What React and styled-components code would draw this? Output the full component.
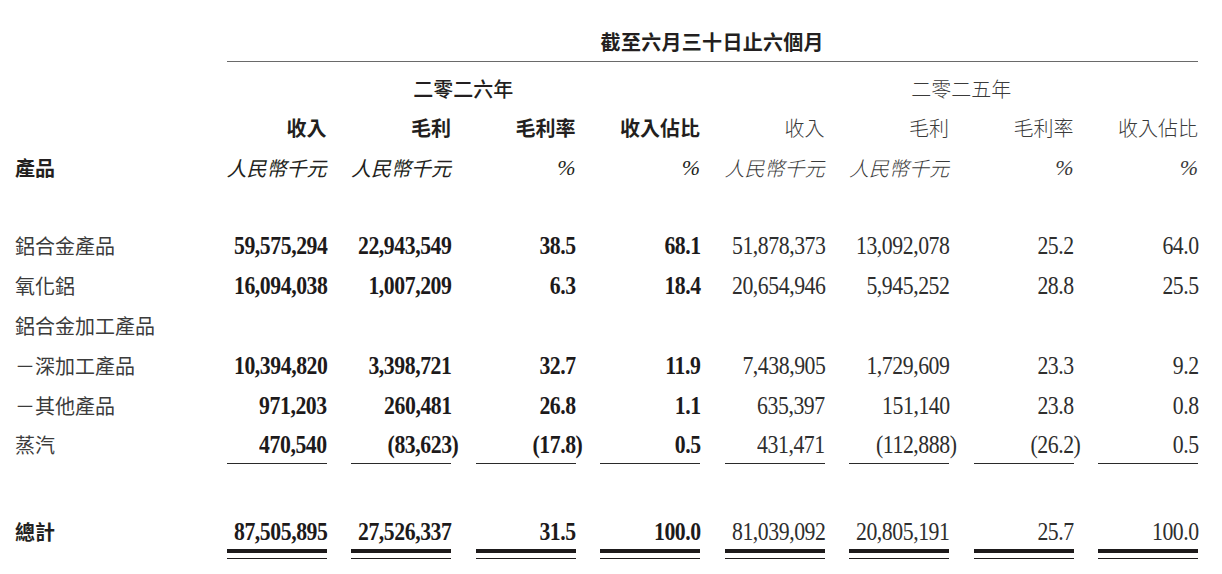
import React from 'react';
import styled, { createGlobalStyle } from 'styled-components';

const GlobalStyle = createGlobalStyle`
  *, *::before, *::after { box-sizing: border-box; }
  html, body { margin: 0; padding: 0; background: #fff; }
  body {
    font-family: "Noto Sans CJK TC", "Noto Sans CJK SC", sans-serif;
    color: #231f20;
  }
`;

const CJK = '"Noto Sans CJK TC", "Noto Sans CJK SC", sans-serif';
const SERIF = '"Liberation Serif", "Times New Roman", serif';

const Sheet = styled.div`
  width: 1222px;
  height: 574px;
  overflow: hidden;
`;

const Row = styled.div`
  display: grid;
  grid-template-columns: 202px repeat(8, 100px);
  column-gap: 24.5px;
  height: ${(p) => p.$h}px;
  padding-top: ${(p) => p.$pt || 0}px;
  margin-top: ${(p) => p.$mt || 0}px;
  align-items: ${(p) => p.$align || 'center'};
`;

const Title = styled.div`
  grid-column: 2 / -1;
  text-align: center;
  font-family: ${CJK};
  font-size: 20px;
  font-weight: 700;
  letter-spacing: 0.3px;
  line-height: 28px;
  padding-bottom: 5px;
  border-bottom: 1.5px solid #6a6a6a;
`;

const Year = styled.div`
  grid-column: ${(p) => p.$span};
  text-align: center;
  font-family: ${CJK};
  font-size: 20px;
  line-height: 28px;
  font-weight: ${(p) => (p.$light ? 300 : 500)};
  color: ${(p) => (p.$light ? '#3a3a3a' : '#231f20')};
`;

const Head = styled.div`
  text-align: right;
  font-family: ${CJK};
  font-size: 20px;
  line-height: 28px;
  white-space: nowrap;
  font-weight: ${(p) => (p.$light ? 300 : 700)};
  color: ${(p) => (p.$light ? '#3a3a3a' : '#231f20')};
`;

const Unit = styled.div`
  text-align: right;
  font-family: ${(p) => (p.$pct ? SERIF : CJK)};
  font-size: ${(p) => (p.$pct ? 22 : 20)}px;
  font-style: italic;
  line-height: 28px;
  white-space: nowrap;
  font-weight: ${(p) => (p.$light ? 300 : 400)};
  color: ${(p) => (p.$light ? '#3a3a3a' : '#231f20')};
`;

const Label = styled.div`
  padding-left: 15px;
  font-family: ${CJK};
  font-size: 20px;
  line-height: 28px;
  white-space: nowrap;
  font-weight: ${(p) => (p.$bold ? 700 : 400)};
  color: ${(p) => (p.$bold ? '#231f20' : '#3b3b3b')};
  height: ${(p) => (p.$h ? `${p.$h}px` : 'auto')};
  display: flex;
  align-items: center;
`;

const Num = styled.div`
  height: 100%;
  display: flex;
  align-items: center;
  justify-content: flex-end;
  font-family: ${SERIF};
  font-size: 25px;
  letter-spacing: -0.5px;
  white-space: nowrap;
  font-weight: ${(p) => (p.$bold ? 700 : 400)};
  color: ${(p) => (p.$bold ? '#1d1a1b' : '#2e2e2e')};
  border-bottom: ${(p) => (p.$under ? '1.5px solid #2a2a2a' : 'none')};
`;

// the printed figures are a condensed Times, so squeeze the serif horizontally
const Figure = styled.span`
  display: inline-block;
  transform: scaleX(0.87);
  transform-origin: right center;
  margin-right: -0.5px;
`;

const Paren = styled.span`
  margin-right: -7.5px;
`;

const TotalCell = styled.div`
  padding-bottom: 4.5px;
  border-bottom: 1.5px solid #1d1a1b;
`;

const TotalInner = styled.div`
  height: 38px;
  border-bottom: 4px solid #1d1a1b;
`;

const heads = ['收入', '毛利', '毛利率', '收入佔比'];
const units = ['人民幣千元', '人民幣千元', '%', '%'];

const rows = [
  ['鋁合金產品', ['59,575,294', '22,943,549', '38.5', '68.1'], ['51,878,373', '13,092,078', '25.2', '64.0']],
  ['氧化鋁', ['16,094,038', '1,007,209', '6.3', '18.4'], ['20,654,946', '5,945,252', '28.8', '25.5']],
  ['鋁合金加工產品', null, null],
  ['－深加工產品', ['10,394,820', '3,398,721', '32.7', '11.9'], ['7,438,905', '1,729,609', '23.3', '9.2']],
  ['－其他產品', ['971,203', '260,481', '26.8', '1.1'], ['635,397', '151,140', '23.8', '0.8']],
  ['蒸汽', ['470,540', '(83,623)', '(17.8)', '0.5'], ['431,471', '(112,888)', '(26.2)', '0.5']],
];

const total = [
  ['87,505,895', '27,526,337', '31.5', '100.0'],
  ['81,039,092', '20,805,191', '25.7', '100.0'],
];

function Value({ v }) {
  if (v.endsWith(')')) {
    return (
      <Figure>
        {v.slice(0, -1)}
        <Paren>)</Paren>
      </Figure>
    );
  }
  return <Figure>{v}</Figure>;
}

function DataRow({ label, cur, prev, last }) {
  return (
    <Row $h={last ? 38 : 40} $align="stretch">
      <Label>{label}</Label>
      {[cur, prev].map((set, si) =>
        [0, 1, 2, 3].map((i) => (
          <Num key={`${si}-${i}`} $bold={si === 0} $under={last}>
            {set ? <Value v={set[i]} /> : null}
          </Num>
        ))
      )}
    </Row>
  );
}

export default function App() {
  return (
    <Sheet>
      <GlobalStyle />

      <Row $h={62} $align="end">
        <Title>截至六月三十日止六個月</Title>
      </Row>

      <Row $h={46} $pt={8}>
        <Year $span="2 / 6">二零二六年</Year>
        <Year $span="6 / 10" $light>
          二零二五年
        </Year>
      </Row>

      <Row $h={40}>
        <div />
        {heads.map((h) => (
          <Head key={`a${h}`}>{h}</Head>
        ))}
        {heads.map((h) => (
          <Head key={`b${h}`} $light>
            {h}
          </Head>
        ))}
      </Row>

      <Row $h={40}>
        <Label $bold>產品</Label>
        {units.map((u, i) => (
          <Unit key={`a${i}`} $pct={u === '%'}>
            {u}
          </Unit>
        ))}
        {units.map((u, i) => (
          <Unit key={`b${i}`} $pct={u === '%'} $light>
            {u}
          </Unit>
        ))}
      </Row>

      <div style={{ height: 38 }} />

      {rows.map(([label, cur, prev], i) => (
        <DataRow key={label} label={label} cur={cur} prev={prev} last={i === rows.length - 1} />
      ))}

      <Row $h={48} $mt={51} $align="start">
        <Label $bold $h={34}>
          總計
        </Label>
        {total.map((set, si) =>
          set.map((v, i) => (
            <TotalCell key={`${si}-${i}`}>
              <TotalInner>
                <Num $bold={si === 0}>
                  <Value v={v} />
                </Num>
              </TotalInner>
            </TotalCell>
          ))
        )}
      </Row>
    </Sheet>
  );
}
